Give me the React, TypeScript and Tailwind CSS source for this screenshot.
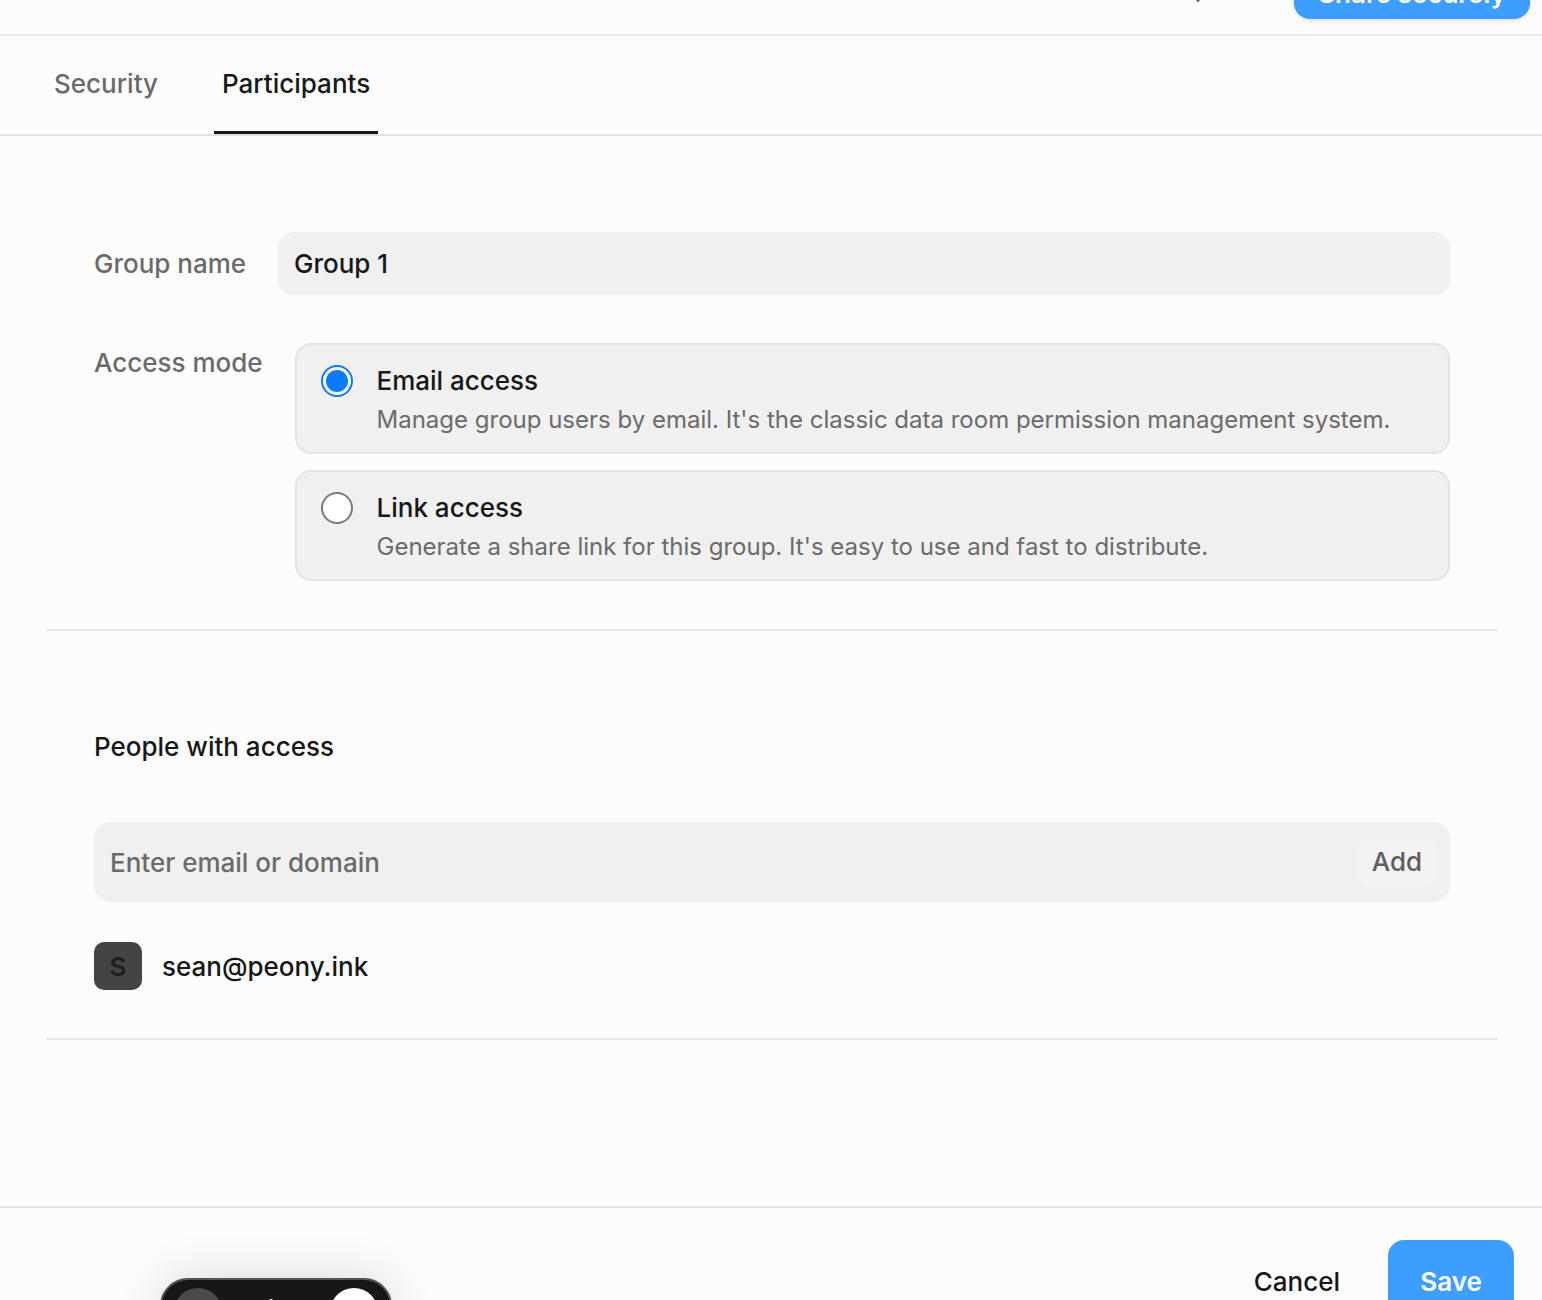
const font = { fontFamily: 'Inter, "Liberation Sans", sans-serif' }

function AccessOption({ title, text, selected }: { title: string; text: string; selected?: boolean }) {
  return (
    <div className="flex h-[111px] items-start gap-[23.5px] rounded-[16px] border-2 border-[#e4e4e4] bg-[#f0f0f0] pl-[24px] pt-[19px]">
      {selected ? (
        <div className="mt-[1px] flex h-[32px] w-[32px] items-center justify-center rounded-full border-2 border-[#0a7aff] bg-white">
          <div className="h-[22px] w-[22px] rounded-full bg-[#0a7aff]" />
        </div>
      ) : (
        <div className="mt-[1px] h-[32px] w-[32px] rounded-full border-2 border-[#7a7a7a] bg-white" />
      )}
      <div>
        <div className="text-[26px] leading-[34px] font-medium text-[#171717]">{title}</div>
        <div className="mt-[5px] text-[24px] leading-[34px] text-[#6b6b6b]">{text}</div>
      </div>
    </div>
  )
}

export default function App() {
  return (
    <div className="h-[1300px] w-[1542px] overflow-hidden bg-[#fcfcfc]" style={font}>
      <header className="flex h-[36px] items-end justify-end overflow-hidden border-b-2 border-[#e9e9e9] pr-[12px]">
        <svg width="12" height="8" viewBox="0 0 12 8" className="mr-[90px] mb-[31px] text-[#666]">
          <path d="M2 1l4 5 4-5" fill="none" stroke="currentColor" strokeWidth="2" />
        </svg>
        <button className="mb-[15px] flex h-[52px] w-[236px] items-center justify-center rounded-[16px] bg-[#3d9eff] text-[26px] font-semibold text-white shadow-[0_2px_4px_rgba(0,0,0,0.1)]">
          Share securely
        </button>
      </header>

      <nav className="flex h-[100px] items-stretch border-b-2 border-[#e2e2e2] pl-[46px]">
        <div className="flex h-[98px] items-center px-[8px] pb-[4px] text-[26px] font-medium text-[#6b6b6b]">Security</div>
        <div className="ml-[48px] flex h-[98px] items-center border-b-[3px] border-[#171717] px-[8px] pb-[1px] text-[26px] font-medium text-[#171717]">
          Participants
        </div>
      </nav>

      <main className="mr-[44px] ml-[46px]">
        <section className="border-b-2 border-[#e9e9e9] px-[48px] pt-[96px] pb-[48px]">
          <div className="flex items-center gap-[32px]">
            <label className="w-[152px] text-[26px] font-medium whitespace-nowrap text-[#6b6b6b]">Group name</label>
            <div className="flex h-[63px] flex-1 items-center rounded-[16px] bg-[#f0f0f0] px-[16px] text-[26px] font-medium text-[#171717]">
              Group 1
            </div>
          </div>
          <div className="mt-[48px] flex gap-[32px]">
            <label className="w-[169px] text-[26px] font-medium whitespace-nowrap text-[#6b6b6b]">Access mode</label>
            <div className="flex flex-1 flex-col gap-[16px]">
              <AccessOption
                selected
                title="Email access"
                text="Manage group users by email. It's the classic data room permission management system."
              />
              <AccessOption
                title="Link access"
                text="Generate a share link for this group. It's easy to use and fast to distribute."
              />
            </div>
          </div>
        </section>

        <section className="border-b-2 border-[#e9e9e9] px-[48px] pt-[99px] pb-[48px]">
          <h2 className="text-[26px] leading-[34px] font-medium text-[#171717]">People with access</h2>
          <div className="mt-[58px] flex h-[80px] items-center justify-between rounded-[16px] bg-[#f0f0f0] pr-[13px] pl-[16px]">
            <span className="text-[26px] font-medium text-[#6b6b6b]">Enter email or domain</span>
            <button className="flex h-[47px] w-[80px] items-center justify-center rounded-[12px] bg-[#f3f3f3] pb-[2px] text-[26px] font-medium text-[#5f5f5f]">
              Add
            </button>
          </div>
          <div className="mt-[40px] flex items-center gap-[20px]">
            <div className="flex h-[48px] w-[48px] items-center justify-center rounded-[10px] bg-[#444444] text-[26px] font-semibold text-[#1f1f1f]">
              S
            </div>
            <span className="text-[26px] font-medium text-[#171717]">sean@peony.ink</span>
          </div>
        </section>
      </main>

      <footer className="mt-[166px] flex h-[120px] items-start justify-between border-t-2 border-[#e2e2e2]">
        <div className="mt-[70px] ml-[160px] flex h-[60px] w-[232px] items-start justify-between rounded-[28px] border-2 border-[#555] bg-[#171717] px-[12px] pt-[8px] shadow-[0_0_48px_rgba(0,0,0,0.14)]">
          <div className="h-[48px] w-[48px] rounded-full bg-[#4a4a4a]" />
          <div className="mt-[11px] mr-[10px] h-[4px] w-[4px] rounded-full bg-white" />
          <div className="h-[48px] w-[48px] rounded-full bg-white" />
        </div>
        <div className="mt-[32px] mr-[28px] flex items-start gap-[48px]">
          <button className="mt-[22px] text-[26px] font-medium text-[#171717]">Cancel</button>
          <button className="flex h-[82px] w-[126px] items-center justify-center rounded-[16px] bg-[#3d9eff] text-[26px] font-semibold text-white">
            Save
          </button>
        </div>
      </footer>
    </div>
  )
}
